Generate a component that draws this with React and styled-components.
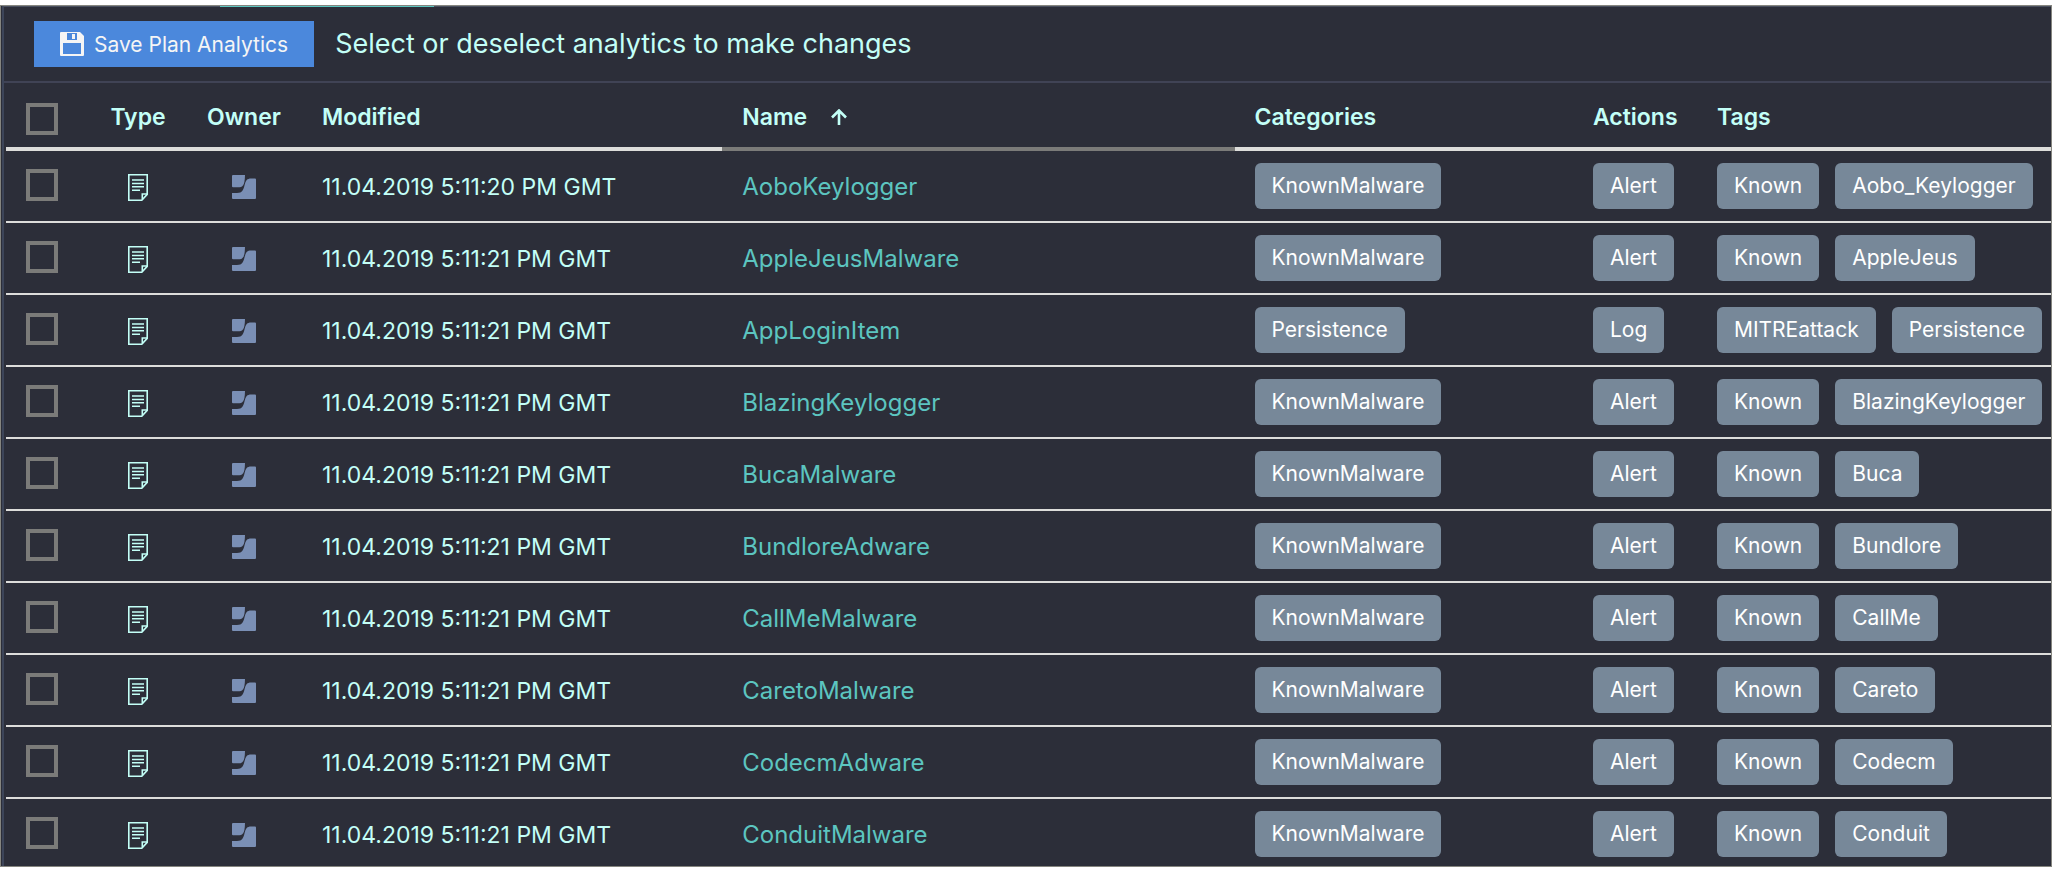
import React from 'react';
import styled, { createGlobalStyle } from 'styled-components';

const GlobalStyle = createGlobalStyle`
  :root {
    --background: #2c2e39;
    --mint: #c3fff7;
    --teal: #5cc5c0;
    --line: #dddddb;
    --outline: #7b7b79;
    --divider: #404355;
    --pill: #778899;
    --owner: #7a8fb5;
    --primary: #4b88dc;
  }

  * {
    box-sizing: border-box;
  }

  body {
    margin: 0;
    background: #fff;
    font-family: Inter, 'Open Sans', sans-serif;
    font-size: 23px;
    color: var(--mint);
  }
`;

const Page = styled.main`
  display: flex;
  flex-direction: column;
  height: 100vh;
  padding: 5px 0;
`;

const Panel = styled.section`
  flex: 1;
  min-height: 0;
  overflow: hidden;
  padding-left: 1px;
  border: 1px solid #85857f;
  background: var(--background);
`;

const PanelBody = styled.div`
  position: relative;
  border-top: 1px solid #4b5160;
  border-left: 2px solid #3d4559;

  /* active tab marker */
  &::before {
    content: '';
    position: absolute;
    top: -1px;
    left: 216px;
    width: 214px;
    height: 1px;
    background: var(--teal);
  }
`;

const Toolbar = styled.header`
  display: flex;
  align-items: center;
  gap: 21px;
  padding: 14px 30px;
  border-bottom: 2px solid var(--divider);

  p {
    margin: 0;
    font-size: 27px;
    line-height: 44px;
  }
`;

const SaveButton = styled.button`
  display: flex;
  align-items: center;
  gap: 10px;
  height: 46px;
  padding: 0 26px;
  border: 0;
  background: var(--primary);
  color: #f5f5f5;
  font-family: inherit;
  font-size: 21px;
  white-space: nowrap;
`;

const Table = styled.table`
  width: calc(100% - 2px);
  margin-left: 2px;
  table-layout: fixed;
  border-collapse: separate;
  border-spacing: 0;
`;

const Column = styled.col`
  width: ${({ $width }) => $width};
`;

const HeadCell = styled.th`
  height: 68px;
  padding: 4px 20px 0;
  border-bottom: 4px solid ${({ $sorted }) => ($sorted ? 'var(--outline)' : 'var(--line)')};
  font-weight: 600;
  text-align: ${({ $center }) => ($center ? 'center' : 'left')};
  white-space: nowrap;
`;

const CheckHead = styled(HeadCell)`
  padding-top: 8px;
`;

const SortButton = styled.button`
  display: flex;
  align-items: center;
  gap: 24px;
  padding: 0;
  border: 0;
  background: none;
  color: inherit;
  font: inherit;
`;

const Cell = styled.td`
  height: 72px;
  padding: 0 20px;
  border-bottom: 2px solid var(--line);
  text-align: ${({ $center }) => ($center ? 'center' : 'left')};
  white-space: nowrap;
`;

const CheckCell = styled(Cell)`
  padding-bottom: 2px;
`;

const IconCell = styled(Cell)`
  padding-top: 2px;

  svg {
    display: block;
    margin: 0 auto;
  }
`;

const TextCell = styled(Cell)`
  padding-top: 1px;
`;

const Checkbox = styled.input.attrs({ type: 'checkbox' })`
  display: block;
  appearance: none;
  width: 32px;
  height: 32px;
  margin: 0;
  border: 4px solid var(--outline);

  &:checked {
    background: var(--teal);
  }
`;

const NameLink = styled.a`
  color: var(--teal);
  font-size: 24px;
  text-decoration: none;
`;

const PillList = styled.div`
  display: flex;
  gap: 16px;
`;

const Pill = styled.span`
  padding: 0 17px;
  border-radius: 6px;
  background: var(--pill);
  color: #fff;
  font-size: 21px;
  line-height: 46px;
`;

function SaveIcon() {
  return (
    <svg width="24" height="24" viewBox="0 0 24 24" fill="currentColor" aria-hidden="true">
      <path
        fillRule="evenodd"
        d="M1 0H20L24 4V23Q24 24 23 24H1Q0 24 0 23V1Q0 0 1 0ZM7 1V8H17V1ZM3 11V22H21V11Z"
      />
      <path d="M12 2H15V7H12Z" />
    </svg>
  );
}

function ArrowUpIcon() {
  return (
    <svg width="16" height="16" viewBox="0 0 16 16" fill="none" stroke="currentColor" strokeWidth="2.6" aria-hidden="true">
      <path d="M8 16V1.5M1 8.5L8 1.5L15 8.5" />
    </svg>
  );
}

function DocumentIcon() {
  return (
    <svg width="20" height="27" viewBox="0 0 20 27" fill="none" stroke="currentColor" strokeWidth="1.6" aria-hidden="true">
      <path d="M0.8 0.8H19.2V20.4L13.8 26.2H0.8Z" />
      <path d="M14.3 25.5V20H19" />
      <path d="M4 6H16M4 9.5H16M4 12.8H16M4 16.2H12" />
    </svg>
  );
}

function OwnerIcon() {
  return (
    <svg width="24" height="24" viewBox="0 0 24 24" fill="var(--owner)" aria-hidden="true">
      <path d="M1 0H13C12.8 7 12 12.3 7.5 12.3H1Q0 12.3 0 11.3V1Q0 0 1 0Z" />
      <path d="M0 18H5C10.5 18 11.4 14.5 12.6 10C13.8 5.5 15 3.5 19 3.5H23Q24 3.5 24 4.5V23Q24 24 23 24H1Q0 24 0 23Z" />
    </svg>
  );
}

const known = (name, tag, time = '5:11:21') => ({
  name,
  modified: `11.04.2019 ${time} PM GMT`,
  category: 'KnownMalware',
  action: 'Alert',
  tags: ['Known', tag],
});

const analytics = [
  known('AoboKeylogger', 'Aobo_Keylogger', '5:11:20'),
  known('AppleJeusMalware', 'AppleJeus'),
  {
    name: 'AppLoginItem',
    modified: '11.04.2019 5:11:21 PM GMT',
    category: 'Persistence',
    action: 'Log',
    tags: ['MITREattack', 'Persistence'],
  },
  known('BlazingKeylogger', 'BlazingKeylogger'),
  known('BucaMalware', 'Buca'),
  known('BundloreAdware', 'Bundlore'),
  known('CallMeMalware', 'CallMe'),
  known('CaretoMalware', 'Careto'),
  known('CodecmAdware', 'Codecm'),
  known('ConduitMalware', 'Conduit'),
];

function AnalyticRow({ analytic }) {
  return (
    <tr>
      <CheckCell>
        <Checkbox aria-label={analytic.name} />
      </CheckCell>
      <IconCell>
        <DocumentIcon />
      </IconCell>
      <IconCell>
        <OwnerIcon />
      </IconCell>
      <TextCell>{analytic.modified}</TextCell>
      <TextCell>
        <NameLink href="#">{analytic.name}</NameLink>
      </TextCell>
      <Cell>
        <PillList>
          <Pill>{analytic.category}</Pill>
        </PillList>
      </Cell>
      <Cell>
        <PillList>
          <Pill>{analytic.action}</Pill>
        </PillList>
      </Cell>
      <Cell>
        <PillList>
          {analytic.tags.map((tag) => (
            <Pill key={tag}>{tag}</Pill>
          ))}
        </PillList>
      </Cell>
    </tr>
  );
}

export default function App() {
  return (
    <>
      <GlobalStyle />
      <Page>
        <Panel>
          <PanelBody>
            <Toolbar>
              <SaveButton type="button">
                <SaveIcon />
                Save Plan Analytics
              </SaveButton>
              <p>Select or deselect analytics to make changes</p>
            </Toolbar>
            <Table>
              <colgroup>
                <Column $width="84px" />
                <Column $width="96px" />
                <Column $width="116px" />
                <Column $width="20.55%" />
                <Column $width="25.05%" />
                <Column $width="16.55%" />
                <Column $width="124px" />
                <Column />
              </colgroup>
              <thead>
                <tr>
                  <CheckHead>
                    <Checkbox aria-label="Select all" />
                  </CheckHead>
                  <HeadCell $center>Type</HeadCell>
                  <HeadCell $center>Owner</HeadCell>
                  <HeadCell>Modified</HeadCell>
                  <HeadCell $sorted aria-sort="ascending">
                    <SortButton type="button">
                      Name
                      <ArrowUpIcon />
                    </SortButton>
                  </HeadCell>
                  <HeadCell>Categories</HeadCell>
                  <HeadCell>Actions</HeadCell>
                  <HeadCell>Tags</HeadCell>
                </tr>
              </thead>
              <tbody>
                {analytics.map((analytic) => (
                  <AnalyticRow key={analytic.name} analytic={analytic} />
                ))}
              </tbody>
            </Table>
          </PanelBody>
        </Panel>
      </Page>
    </>
  );
}
